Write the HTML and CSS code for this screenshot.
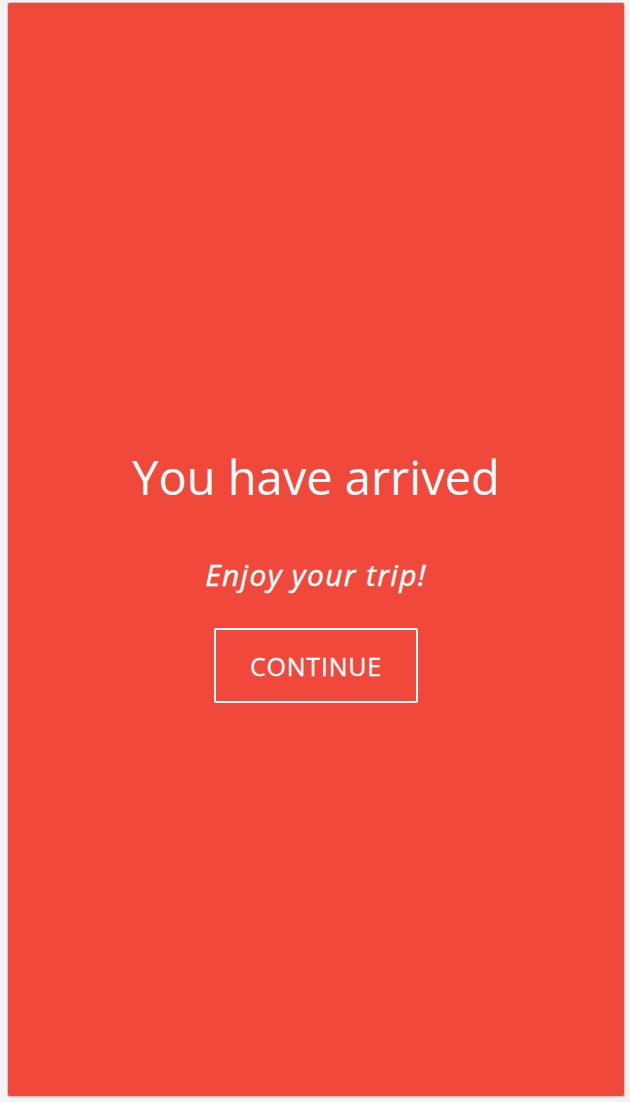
FILE: index.html
```html
<!DOCTYPE html>
<html lang="en">
<head>
<meta charset="utf-8">
<title>You have arrived</title>
<link rel="stylesheet" href="styles.css">
</head>
<body>
<div class="frame">
  <main class="card">
    <h1 class="title">You have arrived</h1>
    <p class="subtitle">Enjoy your trip!</p>
    <button class="btn" type="button">CONTINUE</button>
  </main>
</div>
</body>
</html>
```
FILE: styles.css
```css
html, body {
  margin: 0;
  padding: 0;
  height: 100%;
}
body {
  background: #f3f3f3;
  font-family: "Open Sans", "Noto Sans", sans-serif;
}
.frame {
  box-sizing: border-box;
  height: 1102px;
  padding: 3px 6px 6px 8px;
}
.card {
  box-sizing: border-box;
  height: 100%;
  background: #f0493c;
  border-radius: 2px;
  box-shadow: 0 0 0 1px #c9c9c9, 1px 1px 2px rgba(0,0,0,0.25);
  display: flex;
  flex-direction: column;
  align-items: center;
  padding-top: 446px;
  color: #fff;
}
.title {
  margin: 0;
  font-size: 47px;
  font-weight: 400;
  line-height: 1.2;
}
.subtitle {
  margin: 52px 0 0;
  font-size: 30px;
  font-weight: 400;
  font-style: italic;
  letter-spacing: 1.3px;
  line-height: 1.2;
  -webkit-text-stroke: 0.4px #fff;
}
.btn {
  margin-top: 35px;
  width: 204px;
  height: 75px;
  background: transparent;
  border: 2px solid #fff;
  border-radius: 2px;
  color: #fff;
  font-family: "Open Sans", "Noto Sans", sans-serif;
  font-size: 25px;
  letter-spacing: 0.8px;
  padding: 0;
  -webkit-text-stroke: 0.3px #fff;
}
```
